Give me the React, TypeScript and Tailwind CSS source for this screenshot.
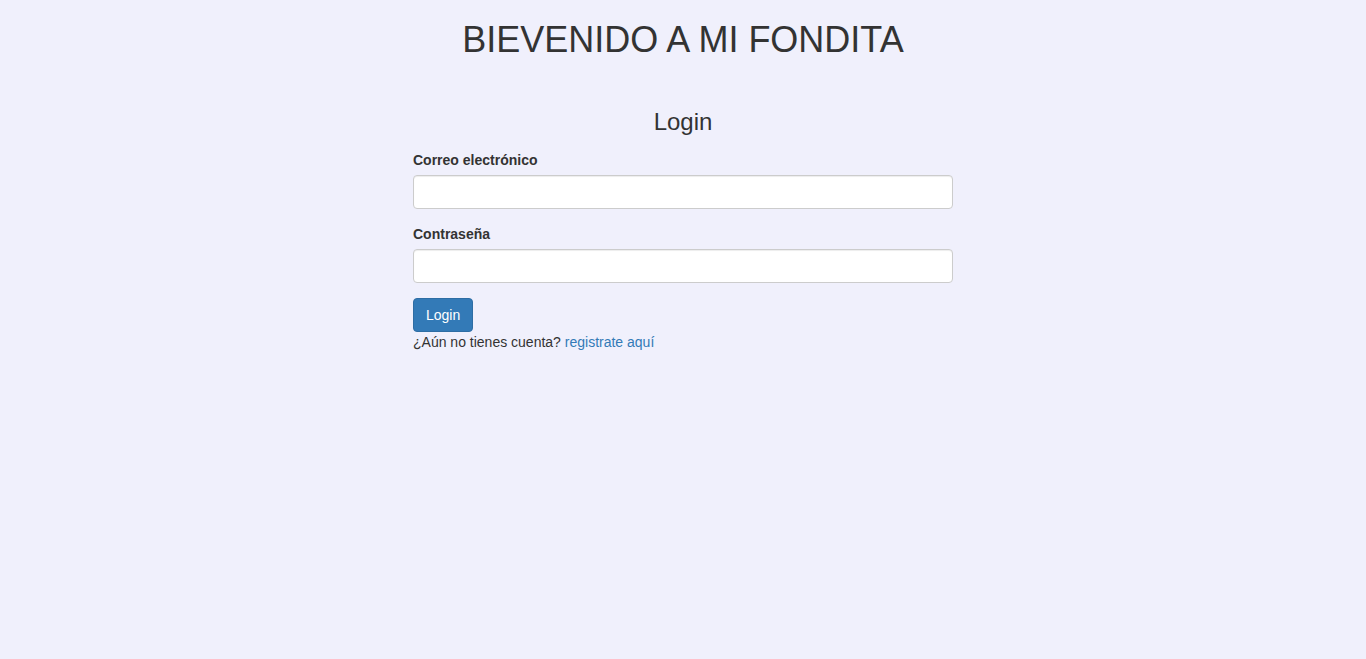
export default function App() {
  return (
    <div
      className="min-h-[659px] bg-[#f0f0fc] text-[14px] leading-[20px] text-[#333333]"
      style={{ fontFamily: '"Liberation Sans", Arial, sans-serif' }}
    >
      <h1 className="pt-[20px] text-center text-[36px] leading-[39.6px] font-normal">
        BIEVENIDO A MI FONDITA
      </h1>

      <div className="mx-auto w-[540px]">
        <h3 className="mt-[49px] mb-[15px] text-center text-[24px] leading-[26.4px] font-normal">
          Login
        </h3>

        <form onSubmit={(e) => e.preventDefault()}>
          <div className="mb-[15px]">
            <label className="mb-[5px] block font-bold">Correo electrónico</label>
            <input
              type="email"
              className="block h-[34px] w-full rounded-[4px] border border-[#cccccc] bg-white px-3 shadow-[inset_0_1px_1px_rgba(0,0,0,0.075)] outline-none"
            />
          </div>
          <div className="mb-[15px]">
            <label className="mb-[5px] block font-bold">Contraseña</label>
            <input
              type="password"
              className="block h-[34px] w-full rounded-[4px] border border-[#cccccc] bg-white px-3 shadow-[inset_0_1px_1px_rgba(0,0,0,0.075)] outline-none"
            />
          </div>
          <button
            type="submit"
            className="h-[34px] rounded-[4px] border border-[#2e6da4] bg-[#337ab7] px-[12px] text-[14px] text-white"
          >
            Login
          </button>
          <p>
            ¿Aún no tienes cuenta?{' '}
            <a href="#" className="text-[#337ab7]">
              registrate aquí
            </a>
          </p>
        </form>
      </div>
    </div>
  );
}
